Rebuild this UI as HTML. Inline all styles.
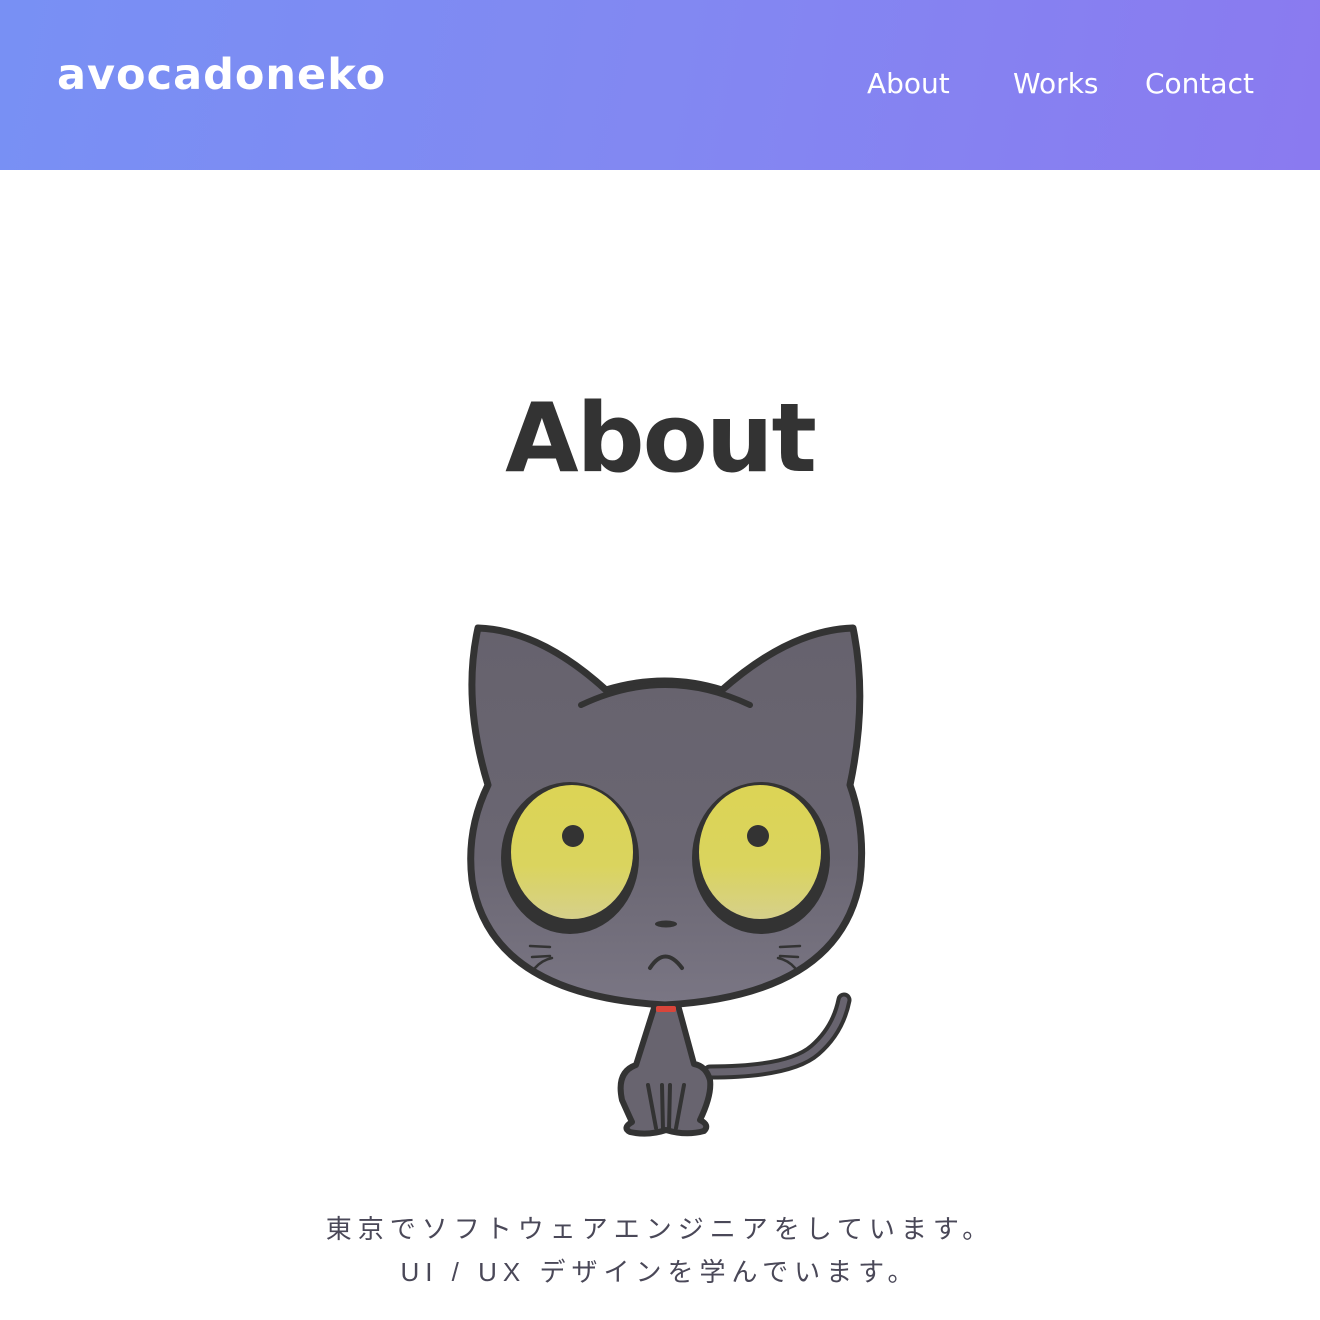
<!DOCTYPE html>
<html><head><meta charset="utf-8"><style>
html,body{margin:0;padding:0;width:1320px;height:1320px;background:#fff;overflow:hidden;font-family:"Liberation Sans","DejaVu Sans",sans-serif}
header{position:absolute;left:0;top:0;width:1320px;height:170px;background:linear-gradient(100deg,#7890f4 0%,#8288f2 50%,#8a7af0 100%)}
.logo{position:absolute;left:57px;top:50px;color:#fff;font-family:"DejaVu Sans","Liberation Sans",sans-serif;font-weight:bold;font-size:43px;letter-spacing:1px}
nav a{position:absolute;top:67px;color:#fff;font-size:28px;text-decoration:none;font-family:"DejaVu Sans","Liberation Sans",sans-serif}
h1{position:absolute;left:0;width:1320px;top:384px;margin:0;text-align:center;font-family:"DejaVu Sans","Liberation Sans",sans-serif;font-weight:bold;font-size:95px;color:#333;letter-spacing:-2px}
.txt{position:absolute;left:0;width:1320px;text-align:center;font-family:"Liberation Sans","Noto Sans CJK JP",sans-serif;font-size:26px;letter-spacing:6px;color:#4a4858}
</style></head><body>
<header>
<div class="logo">avocadoneko</div>
<nav><a style="left:867px">About</a><a style="left:1013px">Works</a><a style="left:1145px">Contact</a></nav>
</header>
<h1>About</h1>
<svg width="1320" height="1320" style="position:absolute;left:0;top:0">
<defs>
<linearGradient id="g" x1="0" y1="0" x2="0" y2="1"><stop offset="0" stop-color="#66626d"/><stop offset="0.6" stop-color="#6a6672"/><stop offset="1" stop-color="#7a7684"/></linearGradient>
<linearGradient id="y" x1="0" y1="0" x2="0" y2="1"><stop offset="0" stop-color="#dcd455"/><stop offset="0.6" stop-color="#dad45e"/><stop offset="1" stop-color="#d6d08a"/></linearGradient>
</defs>
<path d="M710 1072 Q790 1072 815 1050 Q838 1030 844 1000" fill="none" stroke="#333" stroke-width="15" stroke-linecap="round"/>
<path d="M710 1072 Q790 1072 815 1050 Q838 1030 844 1000" fill="none" stroke="#68646f" stroke-width="7" stroke-linecap="round"/>
<path d="M655 1005 L636 1065 Q616 1072 622 1100 Q630 1118 632 1122 Q622 1128 630 1132 Q648 1136 666 1130 Q686 1136 704 1131 Q710 1125 700 1120 Q712 1095 710 1080 Q706 1066 694 1064 L678 1005 Z" fill="#68646f" stroke="#333" stroke-width="6" stroke-linejoin="round"/>
<path d="M648 1085 L656 1128 M662 1085 L663 1130 M670 1085 L669 1130 M684 1085 L676 1128" stroke="#333" stroke-width="4" stroke-linecap="round" fill="none"/>
<path d="M478 628 Q540 630 606 690 Q665 672 722 690 Q790 630 853 628 Q868 700 850 785 Q866 830 860 880 Q840 995 665 1005 Q490 995 472 880 Q466 830 488 785 Q462 700 478 628 Z" fill="url(#g)" stroke="#333" stroke-width="7" stroke-linejoin="round"/>
<path d="M581 705 Q665 665 750 705" fill="none" stroke="#333" stroke-width="6" stroke-linecap="round"/>
<rect x="656" y="1006" width="20" height="6" rx="2" fill="#d9453a"/>
<ellipse cx="570" cy="858" rx="69" ry="76" fill="#333"/>
<ellipse cx="572" cy="852" rx="61" ry="67" fill="url(#y)"/>
<ellipse cx="761" cy="858" rx="69" ry="76" fill="#333"/>
<ellipse cx="760" cy="852" rx="61" ry="67" fill="url(#y)"/>
<circle cx="573" cy="836" r="11" fill="#333"/>
<circle cx="758" cy="836" r="11" fill="#333"/>
<ellipse cx="666" cy="924" rx="11" ry="3.5" fill="#333"/>
<path d="M650 968 Q665 945 682 968" fill="none" stroke="#333" stroke-width="4" stroke-linecap="round"/>
<path d="M530 946 L550 947 M532 957 L550 956 M535 968 Q542 960 552 958 M800 946 L780 947 M798 957 L780 956 M795 968 Q788 960 778 958" fill="none" stroke="#333" stroke-width="2.5" stroke-linecap="round"/>
</svg>
<div class="txt" style="top:1209px">東京でソフトウェアエンジニアをしています。</div>
<div class="txt" style="top:1252px">UI / UX デザインを学んでいます。</div>
</body></html>
